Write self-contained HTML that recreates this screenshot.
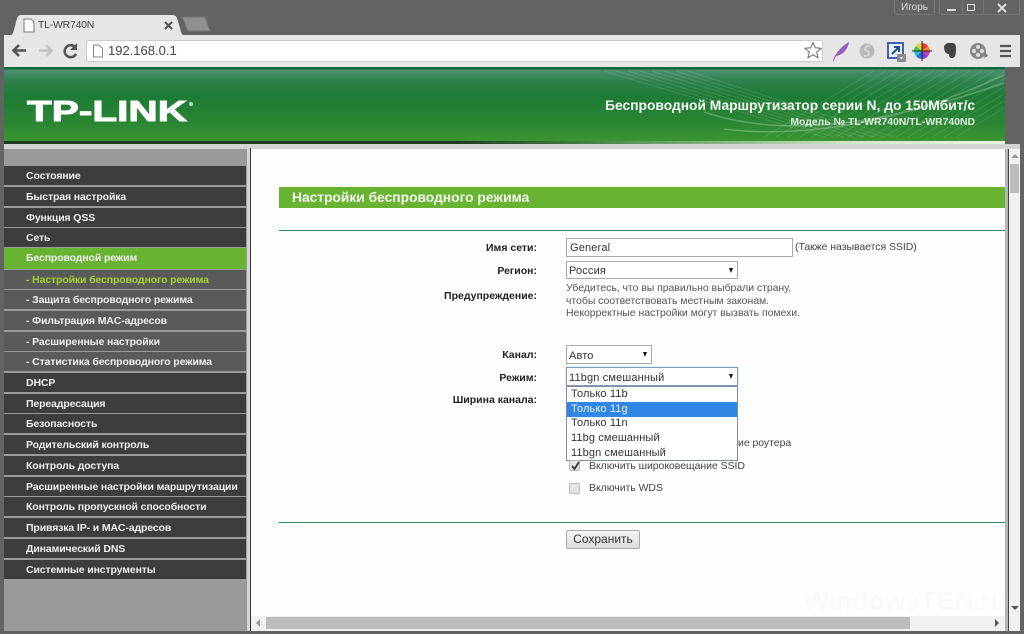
<!DOCTYPE html>
<html><head><meta charset="utf-8">
<style>
html,body{margin:0;padding:0;width:1024px;height:634px;overflow:hidden;background:#616161;font-family:"Liberation Sans","Noto Sans CJK SC",sans-serif}
.a{position:absolute;white-space:nowrap}
.m{position:absolute;left:4px;width:242px;height:19px;background:#3e3c3c;color:#eee;font:bold 10.5px/20px "Liberation Sans",sans-serif;padding-left:22px;box-sizing:border-box;letter-spacing:-.13px;white-space:nowrap}
.s{background:#5a5a5a}
.l{position:absolute;font:bold 10.5px/14px "Liberation Sans",sans-serif;color:#222;text-align:right;right:487px;white-space:nowrap}
.t{position:absolute;font:10.5px/14px "Liberation Sans",sans-serif;color:#444;white-space:nowrap;letter-spacing:-.05px}
.o{position:absolute;left:567px;width:170px;height:15px;font:11px/15px "Liberation Sans",sans-serif;color:#333;padding-left:4px;box-sizing:border-box;letter-spacing:.12px}
.sel{position:absolute;background:#fff;border:1px solid #a9a9a9;box-sizing:border-box;font:11px/20px "Liberation Sans",sans-serif;color:#333;padding-left:2px;letter-spacing:.15px}
.ar{position:absolute;right:4px;top:6px;width:0;height:0;border-left:2.500px solid transparent;border-right:2.500px solid transparent;border-top:5px solid #111}
</style></head><body>
<div style="position:relative;width:1024px;height:634px;overflow:hidden">
<!-- window frame -->
<div class="a" style="left:0;top:0;width:1024px;height:634px;background:#636363"></div>
<div class="a" style="left:894px;top:0;width:41px;height:15px;border:1px solid #777;border-top:0;box-sizing:border-box;color:#ddd;font:10px/15px 'Liberation Sans',sans-serif;text-align:center;border-radius:0 0 3px 3px">Игорь</div>
<div class="a" style="left:939px;top:0;width:81px;height:15px;border:1px solid #777;border-top:0;box-sizing:border-box;border-radius:0 0 3px 3px"></div>
<div class="a" style="left:947px;top:9px;width:9px;height:2px;background:#ddd"></div>
<div class="a" style="left:967px;top:4px;width:8px;height:7px;border:1.500px solid #ddd;box-sizing:border-box"></div>
<div class="a" style="left:962px;top:0;width:1px;height:15px;background:#777"></div>
<div class="a" style="left:983px;top:0;width:1px;height:15px;background:#777"></div>
<svg class="a" style="left:996px;top:3px" width="12" height="10"><path d="M2 1L10 9M10 1L2 9" stroke="#ddd" stroke-width="2"/></svg>
<!-- tabs -->
<svg class="a" style="left:0;top:12px" width="220" height="24">
<path d="M182 5L205 5L210 19L188 19Z" fill="#8f8f8f" stroke="#777"/>
<path d="M8 24C13 24 13 21 15 14L17 6C18 4 19 3 22 3L172 3C175 3 176 4 177 6L180 16C181 21 182 24 186 24Z" fill="#e6e6e6"/>
<path d="M24 7h7l3 3v10h-10z" fill="#fff" stroke="#777"/>
<path d="M165 10L172 17M172 10L165 17" stroke="#555" stroke-width="2"/>
</svg>
<div class="a" style="left:38px;top:18px;font:10.5px/14px 'Liberation Sans',sans-serif;color:#444;letter-spacing:-.25px">TL-WR740N</div>
<!-- toolbar -->
<div class="a" style="left:4px;top:35px;width:1016px;height:32px;background:#e6e6e6"></div>
<svg class="a" style="left:10px;top:40px" width="72" height="22">
<path d="M4 10.500H16M9 5L3.500 10.500L9 16" fill="none" stroke="#555" stroke-width="2.600"/>
<path d="M29 10.500H41M36 5L41.500 10.500L36 16" fill="none" stroke="#c2c2c2" stroke-width="2.400"/>
<path d="M65 7A6 6 0 1 0 66 14" fill="none" stroke="#555" stroke-width="2.600"/><path d="M67 3V10H60Z" fill="#555"/>
</svg>
<div class="a" style="left:86px;top:40px;width:737px;height:22px;background:#fff;border:1px solid #ccc;box-sizing:border-box;border-radius:2px"></div>
<svg class="a" style="left:92px;top:44px" width="12" height="14"><path d="M1.500 1H7L10.500 4.500V13H1.500Z" fill="#fff" stroke="#888"/></svg>
<div class="a" style="left:108px;top:43px;font:13px/15px 'Liberation Sans',sans-serif;color:#444">192.168.0.1</div>
<svg class="a" style="left:804px;top:41px" width="18" height="18"><path d="M9 1.500L11.300 6.700 17 7.300 12.700 11.100 14 16.700 9 13.800 4 16.700 5.300 11.100 1 7.300 6.700 6.700Z" fill="#fff" stroke="#777" stroke-width="1.100"/></svg>
<svg class="a" style="left:830px;top:38px" width="190" height="26">
<path d="M3 22C6 14 12 8 19 4C18 11 13 17 6 18L3 24Z" fill="#9a5cc0"/>
<circle cx="37" cy="13" r="7.500" fill="#b9b9b9"/><path d="M40 8C34 8 34 12 37 13C40 14 40 18 34 18" stroke="#ddd" stroke-width="1.500" fill="none"/>
<rect x="58" y="5" width="15" height="15" fill="#e8eef8" stroke="#3d62a8" stroke-width="2"/><path d="M62 16L69 9M64 9H69V14" stroke="#1c4c94" stroke-width="2" fill="none"/>
<rect x="67" y="16" width="9" height="8" rx="1" fill="#8a8a8a"/><path d="M69.500 19h4l-2 2.500z" fill="#eee"/>
<path d="M92 13L92 5A8 8 0 0 1 98 8Z" fill="#e93a2e"/><path d="M92 13L98 8A8 8 0 0 1 100 13Z" fill="#f08a1e"/><path d="M92 13L100 13A8 8 0 0 1 98 18Z" fill="#c83fc0"/><path d="M92 13L98 18A8 8 0 0 1 92 21Z" fill="#7a3fd8"/><path d="M92 13L92 21A8 8 0 0 1 86 18Z" fill="#2a6fe0"/><path d="M92 13L86 18A8 8 0 0 1 84 13Z" fill="#2ac0d8"/><path d="M92 13L84 13A8 8 0 0 1 86 8Z" fill="#3cc43c"/><path d="M92 13L86 8A8 8 0 0 1 92 5Z" fill="#f2d21e"/><path d="M92 3V23M82 13H102" stroke="#222" stroke-width="1"/>
<path d="M114 8L117 5H122C125 5 126 7 126 10C126 15 126 20 122 20C120 20 119 19 119 16C116 16 114 14 114 8Z" fill="#444"/>
<circle cx="148" cy="13" r="8" fill="#888"/><circle cx="148" cy="9" r="2" fill="#ddd"/><circle cx="148" cy="17" r="2" fill="#ddd"/><circle cx="144" cy="13" r="2" fill="#ddd"/><circle cx="152" cy="13" r="2" fill="#ddd"/><path d="M155 14L158 18L154 20Z" fill="#777"/>
<path d="M170 8H181M170 13H181M170 18H181" stroke="#555" stroke-width="2.200"/>
</svg>
<!-- banner -->
<div class="a" style="left:4px;top:67px;width:1001px;height:77px;background:linear-gradient(#0e6a3c 0,#0e6a3c 2px,#4b9070 3px,#2c7f48 16px,#1e7b35 30px,#2a8533 55px,#3a9433 73px,#3a9433 74px)"></div>
<div class="a" style="left:4px;top:141px;width:1001px;height:3px;background:linear-gradient(90deg,#1d3b1f 0,#1d3b1f 45%,#4a8a48 60%,#cfe8c8 85%,#e8f4e0 100%)"></div>
<svg class="a" style="left:4px;top:67px" width="1001" height="74">
<g stroke="#fff" stroke-opacity=".12" stroke-width="1" fill="none">
<path d="M600 4L820 70M612 4L830 70M624 4L840 70M636 4L850 70M648 4L860 70M660 4L870 70M672 4L880 70M684 4L890 70"/>
<path d="M760 70L870 4M772 70L882 4M784 70L894 4M796 70L906 4M808 70L918 4M820 70L930 4M832 70L942 4M844 70L954 4M856 70L966 4M868 70L978 4M880 70L990 4M892 70L1000 5M904 70L1000 12M916 70L1000 20M928 70L1000 27M940 70L1000 34M952 70L1000 41"/>
<path d="M720 62C800 72 900 55 1000 8M700 45C780 72 880 58 1000 16" stroke-opacity=".25" stroke-width="1.500"/>
</g>
<text x="23" y="54" font-family="Liberation Sans" font-weight="bold" font-size="29" fill="#fff" stroke="#fff" stroke-width=".9" textLength="160" lengthAdjust="spacingAndGlyphs">TP-LINK</text>
<circle cx="187" cy="37" r="2" fill="#bcd8c0"/>
</svg>
<div class="a" style="right:49px;top:98px;font:bold 13.800px/16px 'Liberation Sans',sans-serif;color:#f4f8f2">Беспроводной Маршрутизатор серии N, до 150Мбит/с</div>
<div class="a" style="right:49px;top:116px;font:bold 10.400px/14px 'Liberation Sans',sans-serif;color:#dff0dc">Модель № TL-WR740N/TL-WR740ND</div>
<!-- below banner -->
<div class="a" style="left:4px;top:144px;width:1016px;height:487px;background:#d4d4d4"></div>
<div class="a" style="left:4px;top:149px;width:243px;height:482px;background:#9a9a9a"></div>
<div class="a" style="left:250px;top:148px;width:1px;height:483px;background:#333"></div>
<div class="a" style="left:251px;top:149px;width:754px;height:467px;background:#fefefe;overflow:hidden">
<div class="a" style="left:553px;top:437px;font:bold 26.500px/30px 'Liberation Sans',sans-serif;color:#fafafa">WindowsTEN.ru</div>
</div>
<div class="a" style="left:1005px;top:149px;width:3px;height:482px;background:#b5b5b5"></div>
<div class="a" style="left:1008px;top:149px;width:1px;height:482px;background:#444"></div>
<div class="a" style="left:1009px;top:149px;width:11px;height:482px;background:#f1f1f1"></div>
<div class="a" style="left:1010px;top:164px;width:9px;height:29px;background:#bdbdbd"></div>
<svg class="a" style="left:1010px;top:152px" width="10" height="8"><path d="M1 6L5 2L9 6Z" fill="#999"/></svg>
<svg class="a" style="left:1010px;top:604px" width="10" height="8"><path d="M1 2L5 6L9 2Z" fill="#555"/></svg>
<div class="a" style="left:251px;top:616px;width:754px;height:15px;background:#f1f1f1"></div>
<div class="a" style="left:266px;top:617px;width:644px;height:12px;background:#bdbdbd"></div>
<svg class="a" style="left:254px;top:618px" width="8" height="10"><path d="M6 1L2 5L6 9Z" fill="#999"/></svg>
<svg class="a" style="left:993px;top:618px" width="8" height="10"><path d="M2 1L6 5L2 9Z" fill="#555"/></svg>
<!-- menu -->
<div class="m" style="top:166px">Состояние</div>
<div class="m" style="top:187px">Быстрая настройка</div>
<div class="m" style="top:208px">Функция QSS</div>
<div class="m" style="top:228px">Сеть</div>
<div class="m" style="top:248px;height:21px;line-height:21px;background:#68b432">Беспроводной режим</div>
<div class="m s" style="top:270px;color:#a6d033">- Настройки беспроводного режима</div>
<div class="m s" style="top:290px">- Защита беспроводного режима</div>
<div class="m s" style="top:311px">- Фильтрация MAC-адресов</div>
<div class="m s" style="top:332px">- Расширенные настройки</div>
<div class="m s" style="top:352px">- Статистика беспроводного режима</div>
<div class="m" style="top:373px">DHCP</div>
<div class="m" style="top:394px">Переадресация</div>
<div class="m" style="top:414px">Безопасность</div>
<div class="m" style="top:435px">Родительский контроль</div>
<div class="m" style="top:456px">Контроль доступа</div>
<div class="m" style="top:477px">Расширенные настройки маршрутизации</div>
<div class="m" style="top:497px">Контроль пропускной способности</div>
<div class="m" style="top:518px">Привязка IP- и MAC-адресов</div>
<div class="m" style="top:539px">Динамический DNS</div>
<div class="m" style="top:560px">Системные инструменты</div>
<!-- content -->
<div class="a" style="left:279px;top:187px;width:726px;height:21px;background:#68b432;color:#f4f8ee;font:bold 13.800px/21px 'Liberation Sans',sans-serif;padding-left:13px;box-sizing:border-box">Настройки беспроводного режима</div>
<div class="a" style="left:279px;top:230px;width:726px;height:1px;background:#2f8a5c"></div>
<div class="a" style="left:279px;top:522px;width:726px;height:1px;background:#2f8a5c"></div>
<div class="l" style="top:241px">Имя сети:</div>
<div class="l" style="top:264px">Регион:</div>
<div class="l" style="top:289px">Предупреждение:</div>
<div class="l" style="top:348px">Канал:</div>
<div class="l" style="top:371px">Режим:</div>
<div class="l" style="top:393px">Ширина канала:</div>
<div class="sel" style="left:566px;top:238px;width:227px;height:19px;padding-left:3px;line-height:18px">General</div>
<div class="t" style="left:795px;top:240px">(Также называется SSID)</div>
<div class="sel" style="left:566px;top:261px;width:172px;height:18px;line-height:18px">Россия<i class="ar"></i></div>
<div class="t" style="left:566px;top:282px;line-height:12.500px;color:#555">Убедитесь, что вы правильно выбрали страну,<br>чтобы соответствовать местным законам.<br>Некорректные настройки могут вызвать помехи.</div>
<div class="sel" style="left:566px;top:345px;width:86px;height:19px">Авто<i class="ar"></i></div>
<div class="sel" style="left:566px;top:367px;width:172px;height:19px;border-color:#7f9db9;box-shadow:0 0 1px #7fa8d8">11bgn смешанный<i class="ar"></i></div>
<div class="a" style="left:566px;top:386px;width:172px;height:75px;background:#fff;border:1px solid #7f8c9a;box-sizing:border-box"></div>
<div class="o" style="top:387px">Только 11b</div>
<div class="o" style="top:402px;background:#2f86e4;color:#e8f2fc">Только 11g</div>
<div class="o" style="top:416px">Только 11n</div>
<div class="o" style="top:431px">11bg смешанный</div>
<div class="o" style="top:446px">11bgn смешанный</div>
<div class="t" style="left:738px;top:436px">ие роутера</div>
<div class="a" style="left:569px;top:460px;width:11px;height:11px;background:#e4e4e4;border:1px solid #bbb;box-sizing:border-box;border-radius:2px"></div>
<svg class="a" style="left:569px;top:460px" width="12" height="12"><path d="M3 6L5.500 9L10 2" fill="none" stroke="#333" stroke-width="1.800"/></svg>
<div class="t" style="left:589px;top:459px">Включить широковещание SSID</div>
<div class="a" style="left:569px;top:483px;width:11px;height:11px;background:#e4e4e4;border:1px solid #bbb;box-sizing:border-box;border-radius:2px"></div>
<div class="t" style="left:589px;top:481px">Включить WDS</div>
<div class="a" style="left:566px;top:530px;width:74px;height:19px;background:linear-gradient(#f6f6f6,#dcdcdc);border:1px solid #aaa;box-sizing:border-box;border-radius:2px;font:12px/17px 'Liberation Sans',sans-serif;color:#333;text-align:center">Сохранить</div>
</div>
</body></html>
